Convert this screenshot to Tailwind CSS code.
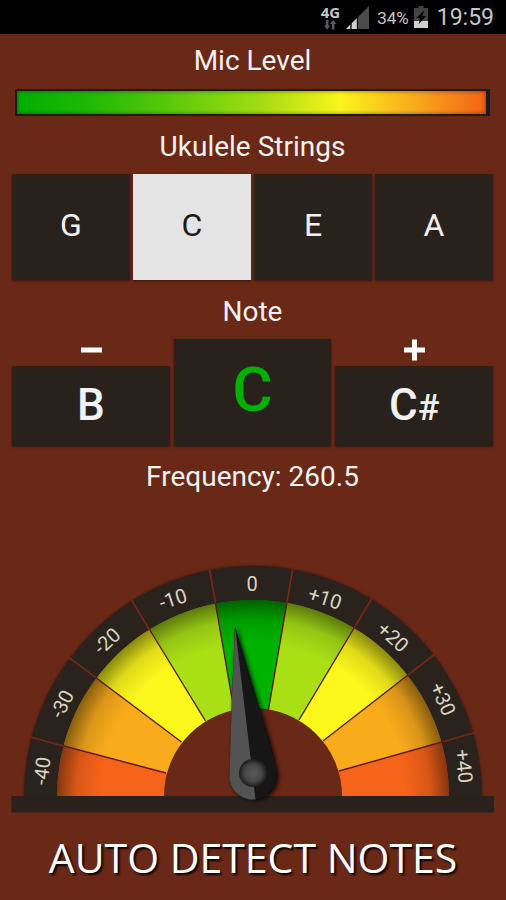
<!DOCTYPE html>
<html lang="en">
<head>
<meta charset="utf-8">
<meta name="viewport" content="width=device-width, initial-scale=1">
<title>Ukulele Tuner</title>
<script src="https://cdn.jsdelivr.net/npm/@tailwindcss/browser@4"></script>
</head>
<body class="min-h-screen bg-[#6a2817] font-['Roboto',sans-serif] text-[#f2f2f2]">
<header class="flex h-[34px] items-center justify-end bg-black pr-3 text-[#c6c6c6]">
  <div class="mr-[6px] flex flex-col items-center">
    <span class="font-['Noto_Sans',sans-serif] text-[15px] leading-4 font-bold">4G</span>
    <svg class="h-[10px] w-[14px]" viewBox="0 0 14 10" fill="#5c5c5c" aria-hidden="true"><path d="M3 0h2.400v5.500h2L4.200 9.500 1 5.500h2zM9 9.500h2.400V4h2L10.200 0 7 4h2z"/></svg>
  </div>
  <svg class="mt-[2px] mr-2 h-6 w-[23px]" viewBox="0 0 23 24" aria-hidden="true"><path d="M0 23L23 0v23z" fill="#4c4c4c"/><path d="M0 23l4.500-4.500V23zM5.500 23v-5.500L11 12v11z" fill="#d0d0d0"/><path d="M5 17v6M11.300 11v12" stroke="#000"/></svg>
  <span class="mt-[2px] text-[17px] leading-6">34%</span>
  <svg class="mx-[5px] h-[22px] w-[14px]" viewBox="0 0 14 22" aria-hidden="true"><path d="M4.500 0h5v2H14v13H0V2h4.500z" fill="#424242"/><path d="M0 15h14v7H0z" fill="#cfcfcf"/><path d="M10.500 4L2.500 12h3.800L4.500 18.500 12 10H8.200z" fill="#000"/></svg>
  <time class="mt-[2px] pl-1 text-[23px] leading-8">19:59</time>
</header>
<main class="pr-[13px] pl-3">
  <section>
    <h2 class="h-[55px] text-center text-[28px] leading-[54px]">Mic Level</h2>
    <div class="mx-[3px] h-[27px] border-2 border-r-4 border-[#1c1a1a] bg-[linear-gradient(90deg,#00ae00_0%,#1cb804_14%,#58c80a_32%,#a4dc12_52%,#fbf41c_69%,#f8ae1c_84%,#f66018_100%)] shadow-[inset_0_0_4px_rgba(0,0,0,0.5)]" role="meter" aria-label="Mic Level" aria-valuemin="0" aria-valuemax="100" aria-valuenow="100"></div>
  </section>
  <section>
    <h2 class="h-[58px] text-center text-[28px] leading-[62px]">Ukulele Strings</h2>
    <div class="grid grid-cols-4 gap-[3px] text-[32px] [&>button]:h-[106px] [&>button]:pb-1 [&>button]:shadow-[0_1px_2px_rgba(0,0,0,0.5)]">
      <button type="button" class="bg-[#29211c]">G</button>
      <button type="button" aria-pressed="true" class="bg-[#e4e4e4] text-[#1c1c1c]">C</button>
      <button type="button" class="bg-[#29211c]">E</button>
      <button type="button" class="bg-[#29211c]">A</button>
    </div>
  </section>
  <section>
    <h2 class="h-[59px] text-center text-[28px] leading-[64px]">Note</h2>
    <div class="grid grid-cols-3 items-end gap-1">
      <button type="button" aria-label="Previous note, B" class="flex flex-col items-center">
        <svg class="mb-[5px] h-[22px] w-[22px]" viewBox="0 0 22 22" fill="#fff" aria-hidden="true"><path d="M1 8.500h21v5H1z"/></svg>
        <span class="h-20 w-full bg-[#29211c] text-[44px] leading-[78px] font-medium shadow-[0_1px_2px_rgba(0,0,0,0.5)]">B</span>
      </button>
      <output class="h-[107px] bg-[#29211c] text-center text-[62px] leading-[102px] font-medium text-[#00b200] shadow-[0_1px_2px_rgba(0,0,0,0.5)]">C</output>
      <button type="button" aria-label="Next note, C sharp" class="flex flex-col items-center">
        <svg class="mb-[5px] h-[22px] w-[22px]" viewBox="0 0 22 22" fill="#fff" aria-hidden="true"><path d="M1 8.500h8V.5h5v8h8v5h-8v8H9v-8H1z"/></svg>
        <span class="h-20 w-full bg-[#29211c] text-[44px] leading-[78px] font-medium shadow-[0_1px_2px_rgba(0,0,0,0.5)]">C<span class="text-4xl leading-none">#</span></span>
      </button>
    </div>
    <p class="h-[60px] text-center text-[28px] leading-[62px]">Frequency: 260.5</p>
  </section>
</main>
<svg class="mt-[34px] w-full" viewBox="0 540 506 280" role="img" aria-label="Tuning gauge in cents">
  <defs>
    <clipPath id="half"><path d="M57 796a196 196 0 0 1 392 0h-107a89 88 0 0 0-178 0z"/></clipPath>
    <radialGradient id="rim" gradientUnits="userSpaceOnUse" cx="253" cy="796" r="196"><stop offset=".78" stop-color="#000" stop-opacity="0"/><stop offset=".9" stop-color="#000" stop-opacity=".12"/><stop offset="1" stop-color="#000" stop-opacity=".45"/></radialGradient>
    <radialGradient id="knob"><stop offset="0" stop-color="#585858"/><stop offset=".6" stop-color="#484848"/><stop offset="1" stop-color="#1c1c1c"/></radialGradient>
    <filter id="soft" x="-30%" y="-10%" width="160%" height="120%"><feDropShadow dx="2" dy="1" stdDeviation="2" flood-color="#000" flood-opacity=".75"/></filter>
    <filter id="glow" x="-5%" y="-5%" width="110%" height="110%"><feDropShadow dx="0" dy="0" stdDeviation="1.500" flood-color="#000" flood-opacity=".5"/></filter>
  </defs>
  <path d="M24 797a229 231 0 0 1 458 0z" fill="#29211c" filter="url(#glow)"/>
  <path d="M164 796a89 88 0 0 1 178 0z" fill="#6a2817"/>
  <g clip-path="url(#half)">
    <path d="M31 737L166 773 253 796v2H20v-60z" fill="#f6631a"/>
    <path d="M31 737L166 773 253 796 181.500 742 69.500 658z" fill="#f9ab1c"/>
    <path d="M69.500 658L181.500 742 253 796 205.500 721 132 601z" fill="#fdf81c"/>
    <path d="M132 601L205.500 721 253 796 234 710 209.500 570z" fill="#a8df15"/>
    <path d="M209.500 570L234 710 253 796 268.500 709.500 292.500 569.500z" fill="#00b200"/>
    <path d="M292.500 569.500L268.500 709.500 253 796 299 720 371 600z" fill="#a8df15"/>
    <path d="M371 600L299 720 253 796 323 741 434 655z" fill="#fdf81c"/>
    <path d="M434 655L323 741 253 796 339 771 474.500 733z" fill="#f9ab1c"/>
    <path d="M474.500 733L339 771 253 796v2h233v-65z" fill="#f6631a"/>
    <circle cx="253" cy="796" r="197" fill="url(#rim)"/>
  </g>
  <path d="M30 737L166 773M69 657.500L181.500 742M131.500 600L205.500 721M209.500 569L234 710M292.700 569L268.500 709.500M371.500 599L299 720M435 654L323 741M475.500 732.500L339 771" stroke="#5e1710" stroke-width="1.400"/>
  <path d="M30 737l33 9M69 657.500l27 20.300M131.500 600l18 30M209.500 569l6 33.500M292.700 569l-5.800 34M371.500 599l-17.400 29M435 654l-27 21M475.500 732.500l-33 9.200" stroke="#702b19" stroke-width="1.600"/>
  <path d="M11.500 796h482.500v16.500H11.500z" fill="#29211c"/>
  <g fill="#d9d5c0" font-family="Roboto, sans-serif" font-size="20" text-anchor="middle">
    <text transform="translate(42 771) rotate(-83)" y="7">-40</text>
    <text transform="translate(62 704) rotate(-63)" y="7">-30</text>
    <text transform="translate(107 641) rotate(-43)" y="7">-20</text>
    <text transform="translate(173 599) rotate(-18)" y="7">-10</text>
    <text transform="translate(252 584)" y="7">0</text>
    <text transform="translate(325 598) rotate(18)" y="7">+10</text>
    <text transform="translate(393 637) rotate(42)" y="7">+20</text>
    <text transform="translate(443 699) rotate(66)" y="7">+30</text>
    <text transform="translate(464 766) rotate(84)" y="7">+40</text>
  </g>
  <g filter="url(#soft)">
    <path d="M235 626L231.800 700 229.500 775C229 789 240 799.500 253.500 799.500S278 789 276.800 773Q275 758 258.500 705z" fill="#121212"/>
    <path d="M235 626L231.800 700 229.500 775C229 789 240 799.500 253.500 799.500L255.500 799.300z" fill="#525252"/>
  </g>
  <circle cx="253" cy="773" r="14" fill="url(#knob)"/>
</svg>
<div class="flex justify-center pt-[10px]">
  <button type="button" class="font-['Open_Sans','Noto_Sans',sans-serif] text-[41px] leading-[54px] text-white [text-shadow:2px_2px_2px_rgba(0,0,0,0.9)]">AUTO DETECT NOTES</button>
</div>
</body>
</html>
